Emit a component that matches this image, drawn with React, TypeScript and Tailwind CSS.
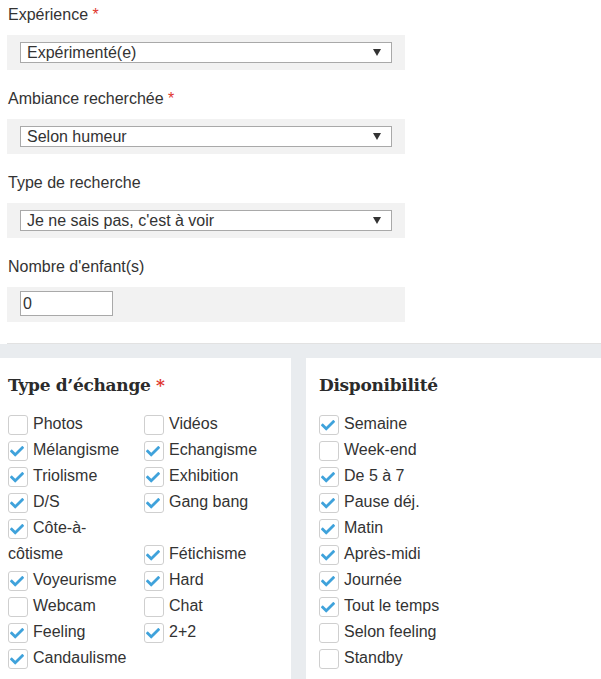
import React from "react";

const CheckIcon = () => (
  <svg
    viewBox="0 64 512 384"
    className="absolute left-[1px] top-[4px] w-[14px] h-[10.5px]"
    fill="#3fa2db"
  >
    <path d="M173.898 439.404l-166.4-166.4c-9.997-9.997-9.997-26.206 0-36.204l36.203-36.204c9.997-9.998 26.207-9.998 36.204 0L192 312.69 432.095 72.596c9.997-9.997 26.207-9.997 36.204 0l36.203 36.204c9.997 9.997 9.997 26.206 0 36.204l-294.4 294.401c-9.998 9.997-26.207 9.997-36.204-.001z" />
  </svg>
);

function Check({ label, checked }: { label: string; checked?: boolean }) {
  return (
    <div className="max-w-[128px] leading-[26px] text-[16px] text-[#333]">
      <span className="relative inline-block w-5 h-5 align-[-6px] mr-[5px] border border-[#cfcfcf] rounded-[3px] bg-white">
        {checked && <CheckIcon />}
      </span>
      {label}
    </div>
  );
}

function Field({
  label,
  required,
  children,
}: {
  label: string;
  required?: boolean;
  children: React.ReactNode;
}) {
  return (
    <div>
      <div className="h-5 leading-5 text-[16px] text-[#333] pl-2">
        {label}
        {required && <span className="text-[#e0372e]"> *</span>}
      </div>
      <div className="mt-[10px] ml-[7px] w-[398px] h-[35px] bg-[#f2f2f2] pl-[13px]">
        {children}
      </div>
    </div>
  );
}

function FakeSelect({ value }: { value: string }) {
  return (
    <div className="pt-[7px]">
      <div className="flex items-center justify-between w-[372px] h-[21px] border border-[#a9a9a9] bg-white pl-[6px] pr-[10px] text-[16px] leading-[19px] text-[#333]">
        <span>{value}</span>
        <svg viewBox="0 0 8 7" className="w-[8px] h-[7px]" fill="#333">
          <polygon points="0,0 8,0 4,7" />
        </svg>
      </div>
    </div>
  );
}

const echange: [string, boolean][] = [
  ["Photos", false],
  ["Vidéos", false],
  ["Mélangisme", true],
  ["Echangisme", true],
  ["Triolisme", true],
  ["Exhibition", true],
  ["D/S", true],
  ["Gang bang", true],
  ["Côte-à-côtisme", true],
  ["Fétichisme", true],
  ["Voyeurisme", true],
  ["Hard", true],
  ["Webcam", false],
  ["Chat", false],
  ["Feeling", true],
  ["2+2", true],
  ["Candaulisme", true],
];

const dispo: [string, boolean][] = [
  ["Semaine", true],
  ["Week-end", false],
  ["De 5 à 7", true],
  ["Pause déj.", true],
  ["Matin", true],
  ["Après-midi", true],
  ["Journée", true],
  ["Tout le temps", true],
  ["Selon feeling", false],
  ["Standby", false],
];

export default function App() {
  return (
    <div className="w-[601px] h-[679px] overflow-hidden bg-white font-['Liberation_Sans',Arial,sans-serif]">
      <div className="flex flex-col gap-[19px] pt-[5px]">
        <Field label="Expérience" required>
          <FakeSelect value="Expérimenté(e)" />
        </Field>
        <Field label="Ambiance recherchée" required>
          <FakeSelect value="Selon humeur" />
        </Field>
        <Field label="Type de recherche">
          <FakeSelect value="Je ne sais pas, c'est à voir" />
        </Field>
        <Field label="Nombre d'enfant(s)">
          <div className="pt-[4px]">
            <div className="w-[93px] h-[25px] border border-[#a9a9a9] bg-white pl-[2px] text-[16px] leading-[23px] text-[#333]">
              0
            </div>
          </div>
        </Field>
      </div>

      <div className="mt-[21px]">
        <div className="ml-[7px] h-px bg-[#e2e2e2]" />
        <div className="flex gap-[15px] bg-[#e9ecef] pt-[14px]">
          <div className="w-[291px] h-[340px] bg-white pl-2 pt-[15px]">
            <div className="h-6 leading-6 font-['DejaVu_Serif',serif] font-bold text-[17px] text-[#2b2b2b] tracking-[-0.3px]">
              Type d’échange<span className="text-[#e0372e]"> *</span>
            </div>
            <div className="mt-[14px] grid grid-cols-[136px_136px] items-end">
              {echange.map(([l, c]) => (
                <Check key={l} label={l} checked={c} />
              ))}
            </div>
          </div>
          <div className="flex-1 h-[340px] bg-white pl-[13px] pt-[15px]">
            <div className="h-6 leading-6 font-['DejaVu_Serif',serif] font-bold text-[17px] text-[#2b2b2b] tracking-[-0.3px]">
              Disponibilité
            </div>
            <div className="mt-[14px] flex flex-col">
              {dispo.map(([l, c]) => (
                <Check key={l} label={l} checked={c} />
              ))}
            </div>
          </div>
        </div>
      </div>
    </div>
  );
}
